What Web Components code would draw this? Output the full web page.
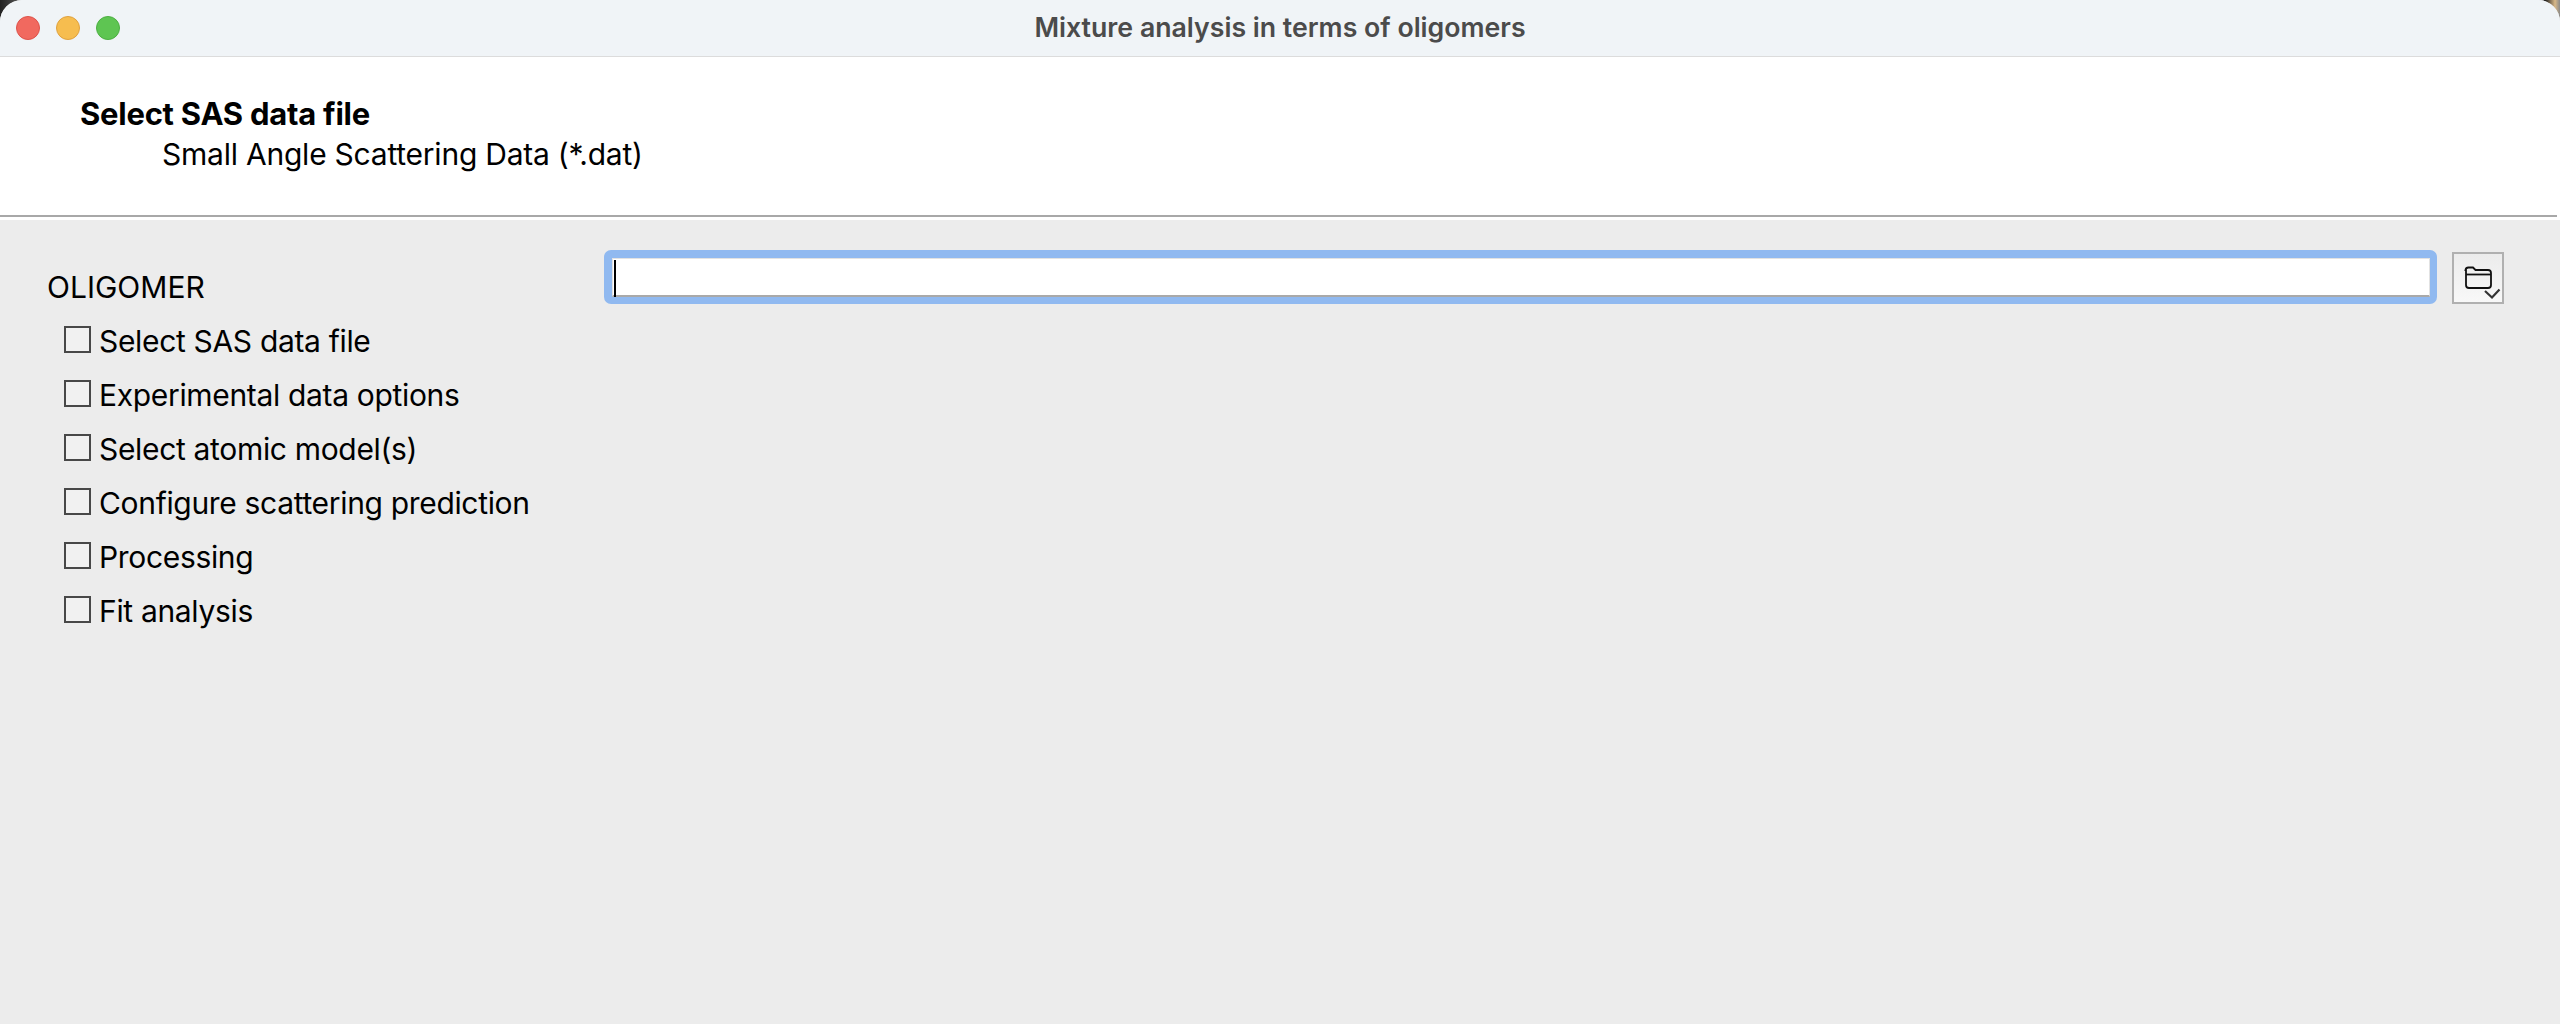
<!DOCTYPE html>
<html>
<head>
<meta charset="utf-8">
<title>Mixture analysis in terms of oligomers</title>
<style>
  html, body { margin: 0; height: 100%; }
  body {
    background: linear-gradient(90deg, #222 0, #555 20px, #333 2530px, #1c1c1c 2545px, #d8b888 2555px, #8a8a8a 2560px);
    font-family: Inter, "Noto Sans", sans-serif;
    overflow: hidden;
  }
</style>
</head>
<body>
<app-window heading="Mixture analysis in terms of oligomers">
  <wizard-header slot="header" heading="Select SAS data file" sub="Small Angle Scattering Data (*.dat)"></wizard-header>
  <step-list slot="side" heading="OLIGOMER">
    <step-item>Select SAS data file</step-item>
    <step-item>Experimental data options</step-item>
    <step-item>Select atomic model(s)</step-item>
    <step-item>Configure scattering prediction</step-item>
    <step-item>Processing</step-item>
    <step-item>Fit analysis</step-item>
  </step-list>
  <file-picker slot="main"></file-picker>
</app-window>

<script>
'use strict'

class AppWindow extends HTMLElement {
  constructor () {
    super()
    const root = this.attachShadow({ mode: 'open' })
    root.innerHTML = `
    <style>
      :host {
        display: flex;
        flex-direction: column;
        height: 1024px;
        border-radius: 22px 22px 0 0;
        overflow: hidden;
        background: #ececec;
        color: #000;
      }
      #bar {
        flex: none;
        height: 56px;
        border-bottom: 1px solid #dcdcdc;
        background: #f0f4f7;
        display: flex;
        align-items: center;
        position: relative;
      }
      #lights {
        display: flex;
        gap: 16px;
        padding: 0 0 0 16px;
      }
      .light {
        width: 24px;
        height: 24px;
        box-sizing: border-box;
        border-radius: 50%;
        border: 1px solid;
      }
      .red { background: #f1695f; border-color: #dd534b; }
      .yellow { background: #f6bd4f; border-color: #dfa13f; }
      .green { background: #5ec552; border-color: #4caf42; }
      #title {
        position: absolute;
        left: 0;
        right: 0;
        top: 0;
        bottom: 3px;
        display: flex;
        align-items: center;
        justify-content: center;
        font: 600 26.700px Inter, sans-serif;
        color: #4b4b4b;
      }
      #body {
        flex: 1;
        display: flex;
        padding: 30px 0 0 0;
        min-height: 0;
      }
    </style>
    <div id="bar">
      <div id="lights">
        <div class="light red"></div>
        <div class="light yellow"></div>
        <div class="light green"></div>
      </div>
      <div id="title"></div>
    </div>
    <slot name="header"></slot>
    <div id="body">
      <slot name="side"></slot>
      <slot name="main"></slot>
    </div>
    `
    root.querySelector('#title').textContent = this.getAttribute('heading')
  }
}

class WizardHeader extends HTMLElement {
  constructor () {
    super()
    const root = this.attachShadow({ mode: 'open' })
    root.innerHTML = `
    <style>
      :host {
        display: block;
        flex: none;
        background: #fff;
        height: 163px;
      }
      #box {
        height: 160px;
        box-sizing: border-box;
        padding: 36px 0 0 80px;
        border-bottom: 2px solid #a8a8a8;
        margin-right: 3px;
      }
      h1 {
        margin: 0;
        font: 700 31px/41px Inter, sans-serif;
        letter-spacing: -0.25px;
      }
      p {
        margin: 0 0 0 82px;
        font: 400 30px/40px Inter, sans-serif;
        letter-spacing: -0.23px;
      }
    </style>
    <div id="box">
      <h1></h1>
      <p></p>
    </div>
    `
    root.querySelector('h1').textContent = this.getAttribute('heading')
    root.querySelector('p').textContent = this.getAttribute('sub')
  }
}

class StepList extends HTMLElement {
  constructor () {
    super()
    const root = this.attachShadow({ mode: 'open' })
    root.innerHTML = `
    <style>
      :host {
        display: block;
        flex: none;
        width: 604px;
        box-sizing: border-box;
        padding: 10px 0 0 47px;
      }
      #heading {
        font: 400 30px/54px Inter, sans-serif;
      }
      #items {
        display: flex;
        flex-direction: column;
        padding-left: 17px;
      }
    </style>
    <div id="heading"></div>
    <div id="items"><slot></slot></div>
    `
    root.querySelector('#heading').textContent = this.getAttribute('heading')
  }
}

class StepItem extends HTMLElement {
  constructor () {
    super()
    const root = this.attachShadow({ mode: 'open' })
    root.innerHTML = `
    <style>
      :host {
        display: flex;
        align-items: center;
        height: 54px;
        gap: 8px;
        font: 400 30px/54px Inter, sans-serif;
        letter-spacing: -0.33px;
        white-space: nowrap;
      }
      #check {
        flex: none;
        width: 27px;
        height: 27px;
        box-sizing: border-box;
        border: 2px solid #484848;
        background: #f1f1f1;
        margin-top: -3px;
      }
    </style>
    <div id="check"></div>
    <span><slot></slot></span>
    `
  }
}

class FilePicker extends HTMLElement {
  constructor () {
    super()
    const root = this.attachShadow({ mode: 'open' })
    root.innerHTML = `
    <style>
      :host {
        display: flex;
        align-items: flex-start;
        gap: 15px;
        width: 1900px;
      }
      #field {
        flex: none;
        width: 1833px;
        height: 54px;
        box-sizing: border-box;
        border: 7px solid #90b9f0;
        border-top-width: 8px;
        border-left-width: 8px;
        border-radius: 7px;
        background: #fff;
        position: relative;
      }
      #inner {
        height: 100%;
        box-sizing: border-box;
        border: 1px solid #e2e2e2;
        border-bottom: 2px solid #a9a9a9;
      }
      #caret {
        position: absolute;
        left: 2px;
        top: 2px;
        bottom: 0;
        width: 2px;
        background: #000;
      }
      button {
        flex: none;
        width: 52px;
        height: 52px;
        margin-top: 2px;
        padding: 0;
        border: 2px solid #b0b0b0;
        background: linear-gradient(#ececec, #f8f8f8);
        display: flex;
        align-items: center;
        justify-content: center;
      }
    </style>
    <div id="field"><div id="inner"></div><div id="caret"></div></div>
    <button aria-label="Browse">
      <svg width="48" height="48" viewBox="0 0 48 48" fill="none">
        <path d="M12 16v15a3 3 0 0 0 3 3h19a3 3 0 0 0 3-3v-12a3 3 0 0 0-3-3h-12.500l-2.500-2.500h-4.500a3 3 0 0 0-3 2.500z" stroke="#111" stroke-width="1.800"/>
        <path d="M12 20.500h25" stroke="#111" stroke-width="1.800"/>
        <path d="M31 37l7 6.500 7.500-8" stroke="#333" stroke-width="2.200"/>
      </svg>
    </button>
    `
  }
}

customElements.define('app-window', AppWindow)
customElements.define('wizard-header', WizardHeader)
customElements.define('step-list', StepList)
customElements.define('step-item', StepItem)
customElements.define('file-picker', FilePicker)
</script>
</body>
</html>
